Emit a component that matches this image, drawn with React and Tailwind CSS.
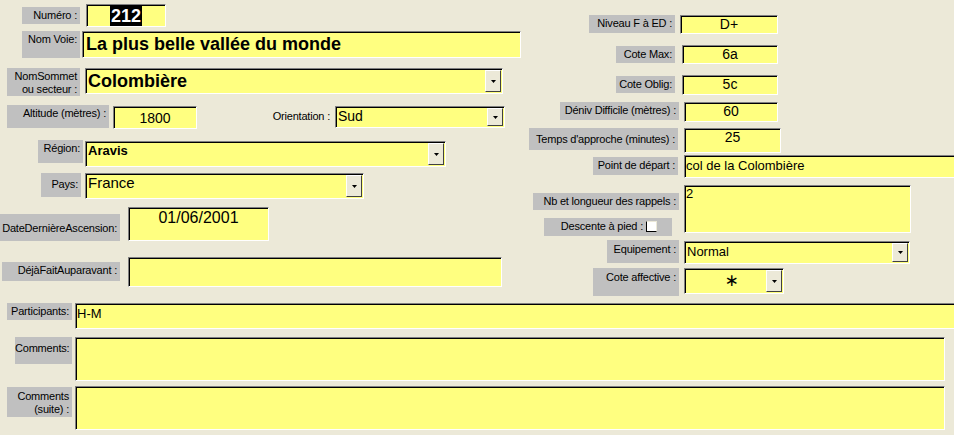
import React from 'react';

const FONT = { fontFamily: '"Liberation Sans", Arial, sans-serif' };

const lbl = "bg-[#C0C0C0] text-[11px] leading-[13px] tracking-[-0.2px] whitespace-nowrap text-black text-right pr-[3px] pt-[2px] shrink-0";
const fld = "bg-[#FFFF80] border border-t-[#808080] border-l-[#808080] border-b-white border-r-white shadow-[inset_1px_1px_0_#000] shrink-0 overflow-hidden";

function Arrow() {
  return (
    <div className="w-[16px] self-stretch my-[1px] mr-[1px] bg-[#ECE9D8] border border-t-white border-l-white border-b-[#404040] border-r-[#404040] flex items-center justify-center shrink-0">
      <svg width="5" height="3" viewBox="0 0 5 3"><path d="M0 0h5L2.5 3z" fill="#000" /></svg>
    </div>
  );
}

function Combo({ className, textClass, children }) {
  return (
    <div className={`${fld} ${className} flex items-stretch`}>
      <div className={`flex-1 pl-[2px] ${textClass}`}>{children}</div>
      <Arrow />
    </div>
  );
}

export default function App() {
  return (
    <div className="w-[954px] h-[435px] bg-[#ECE9D8] overflow-hidden" style={FONT}>
      <div className="flex h-[303px]">
        {/* colonne gauche */}
        <div className="w-[525px] shrink-0 flex flex-col">
          <div className="flex items-start mt-[4px]">
            <div className={`${lbl} ml-[22px] mt-[3px] w-[58px] h-[17px]`}>Numéro :</div>
            <div className={`${fld} ml-[6px] w-[80px] h-[23px] pl-[23px]`}>
              <span className="bg-black text-white font-bold text-[18px] leading-[21px] px-[1px]">212</span>
            </div>
          </div>
          <div className="flex items-start mt-[4px]">
            <div className={`${lbl} ml-[22px] w-[58px] h-[27px]`}>Nom Voie:</div>
            <div className={`${fld} ml-[2px] w-[439px] h-[27px] pl-[3px] font-bold text-[18px] leading-[24px]`}>La plus belle vallée du monde</div>
          </div>
          <div className="flex items-start mt-[10px]">
            <div className={`${lbl} ml-[7px] w-[73px] h-[28px] leading-[12px]`}>NomSommet<br />ou secteur :</div>
            <Combo className="ml-[5px] w-[418px] h-[26px]" textClass="font-bold text-[18px] leading-[24px]">Colombière</Combo>
          </div>
          <div className="flex items-start mt-[9px]">
            <div className={`${lbl} ml-[7px] w-[102px] h-[23px]`}>Altitude (mètres) :</div>
            <div className={`${fld} ml-[4px] mt-[1px] w-[84px] h-[23px] text-center text-[14px] leading-[22px]`}>1800</div>
            <div className="ml-[70px] mt-[5px] text-[11px] leading-[13px] tracking-[-0.2px] w-[63px] text-right">Orientation :</div>
            <Combo className="ml-[5px] mt-[1px] w-[170px] h-[22px]" textClass="text-[14px] leading-[18px]">Sud</Combo>
          </div>
          <div className="flex items-start mt-[11px]">
            <div className={`${lbl} ml-[38px] w-[45px] h-[23px]`}>Région:</div>
            <Combo className="ml-[2px] mt-[1px] w-[361px] h-[26px]" textClass="font-bold text-[13px] leading-[18px]">Aravis</Combo>
          </div>
          <div className="flex items-start mt-[6px]">
            <div className={`${lbl} ml-[41px] w-[40px] h-[24px] pt-[5px]`}>Pays:</div>
            <Combo className="ml-[4px] w-[279px] h-[26px]" textClass="text-[15px] leading-[18px]">France</Combo>
          </div>
          <div className="flex items-start mt-[8px]">
            <div className={`${lbl} ml-0 mt-[7px] w-[120px] h-[27px] pt-[8px]`}>DateDernièreAscension:</div>
            <div className={`${fld} ml-[8px] w-[141px] h-[34px] text-center text-[16px] leading-[20px]`}>01/06/2001</div>
          </div>
          <div className="flex items-start mt-[16px]">
            <div className={`${lbl} ml-[2px] mt-[5px] w-[118px] h-[19px]`}>DéjàFaitAuparavant :</div>
            <div className={`${fld} ml-[8px] w-[374px] h-[30px]`}></div>
          </div>
        </div>

        {/* colonne droite */}
        <div className="flex-1 flex flex-col">
          <div className="flex items-start mt-[15px]">
            <div className={`${lbl} ml-[64px] w-[86px] h-[18px]`}>Niveau F à ED :</div>
            <div className={`${fld} ml-[5px] w-[98px] h-[19px] text-center text-[14px] leading-[16px]`}>D+</div>
          </div>
          <div className="flex items-start mt-[11px]">
            <div className={`${lbl} ml-[91px] mt-[1px] w-[59px] h-[17px]`}>Cote Max:</div>
            <div className={`${fld} ml-[7px] w-[96px] h-[19px] text-center text-[14px] leading-[17px]`}>6a</div>
          </div>
          <div className="flex items-start mt-[11px]">
            <div className={`${lbl} ml-[91px] mt-[1px] w-[59px] h-[17px]`}>Cote Oblig:</div>
            <div className={`${fld} ml-[7px] w-[96px] h-[20px] text-center text-[14px] leading-[17px]`}>5c</div>
          </div>
          <div className="flex items-start mt-[7px]">
            <div className={`${lbl} ml-[35px] w-[119px] h-[18px]`}>Déniv Difficile (mètres) :</div>
            <div className={`${fld} ml-[5px] w-[94px] h-[20px] text-center text-[14px] leading-[17px]`}>60</div>
          </div>
          <div className="flex items-start mt-[6px]">
            <div className={`${lbl} ml-[4px] w-[149px] h-[22px] pt-[5px]`}>Temps d'approche (minutes) :</div>
            <div className={`${fld} ml-[6px] w-[97px] h-[25px] text-center text-[14px] leading-[17px]`}>25</div>
          </div>
          <div className="flex items-start mt-[2px]">
            <div className={`${lbl} ml-[68px] mt-[2px] w-[85px] h-[18px]`}>Point de départ :</div>
            <div className={`${fld} ml-[6px] w-[280px] h-[23px] pl-[1px] text-[13px] leading-[19px]`}>col de la Colombière</div>
          </div>
          <div className="flex items-start mt-[7px]">
            <div className="flex flex-col items-start">
              <div className={`${lbl} ml-[8px] mt-[8px] w-[146px] h-[17px]`}>Nb et longueur des rappels :</div>
              <div className={`${lbl} ml-[19px] mt-[8px] w-[128px] h-[18px] flex items-start justify-end`}>
                <span>Descente à pied :</span>
                <span className="ml-[3px] mt-[1px] w-[11px] h-[11px] bg-white border border-l-black border-b-black border-t-[#ECE9D8] border-r-[#ECE9D8] inline-block"></span>
                <span className="w-[12px]"></span>
              </div>
            </div>
            <div className={`${fld} ml-[5px] w-[227px] h-[48px] pl-[1px] text-[13px] leading-[16px]`}>2</div>
          </div>
          <div className="flex items-start mt-[4px]">
            <div className={`${lbl} ml-[82px] w-[72px] h-[23px] pt-[3px]`}>Equipement :</div>
            <Combo className="ml-[5px] mt-[1px] w-[226px] h-[23px]" textClass="text-[13px] leading-[19px]">Normal</Combo>
          </div>
          <div className="flex items-start mt-[4px]">
            <div className={`${lbl} ml-[68px] w-[86px] h-[28px] pt-[3px]`}>Cote affective :</div>
            <Combo className="ml-[5px] w-[100px] h-[26px]" textClass="text-center text-[17px] leading-[22px] pl-[12px]" >
              <span style={{ fontFamily: '"DejaVu Sans", sans-serif' }}>∗</span>
            </Combo>
          </div>
        </div>
      </div>

      {/* zone du bas */}
      <div className="flex flex-col">
        <div className="flex items-start">
          <div className={`${lbl} ml-[7px] w-[65px] h-[17px]`}>Participants:</div>
          <div className={`${fld} ml-[3px] w-[885px] h-[26px] pl-[1px] text-[13px] leading-[20px]`}>H-M</div>
        </div>
        <div className="flex items-start mt-[8px]">
          <div className={`${lbl} ml-[15px] w-[57px] h-[27px] pt-[5px]`}>Comments:</div>
          <div className={`${fld} ml-[3px] w-[870px] h-[44px]`}></div>
        </div>
        <div className="flex items-start mt-[5px]">
          <div className={`${lbl} ml-[7px] mt-[1px] w-[65px] h-[30px] leading-[12px] pt-[3px]`}>Comments<br />(suite) :</div>
          <div className={`${fld} ml-[3px] w-[870px] h-[44px]`}></div>
        </div>
      </div>
    </div>
  );
}
